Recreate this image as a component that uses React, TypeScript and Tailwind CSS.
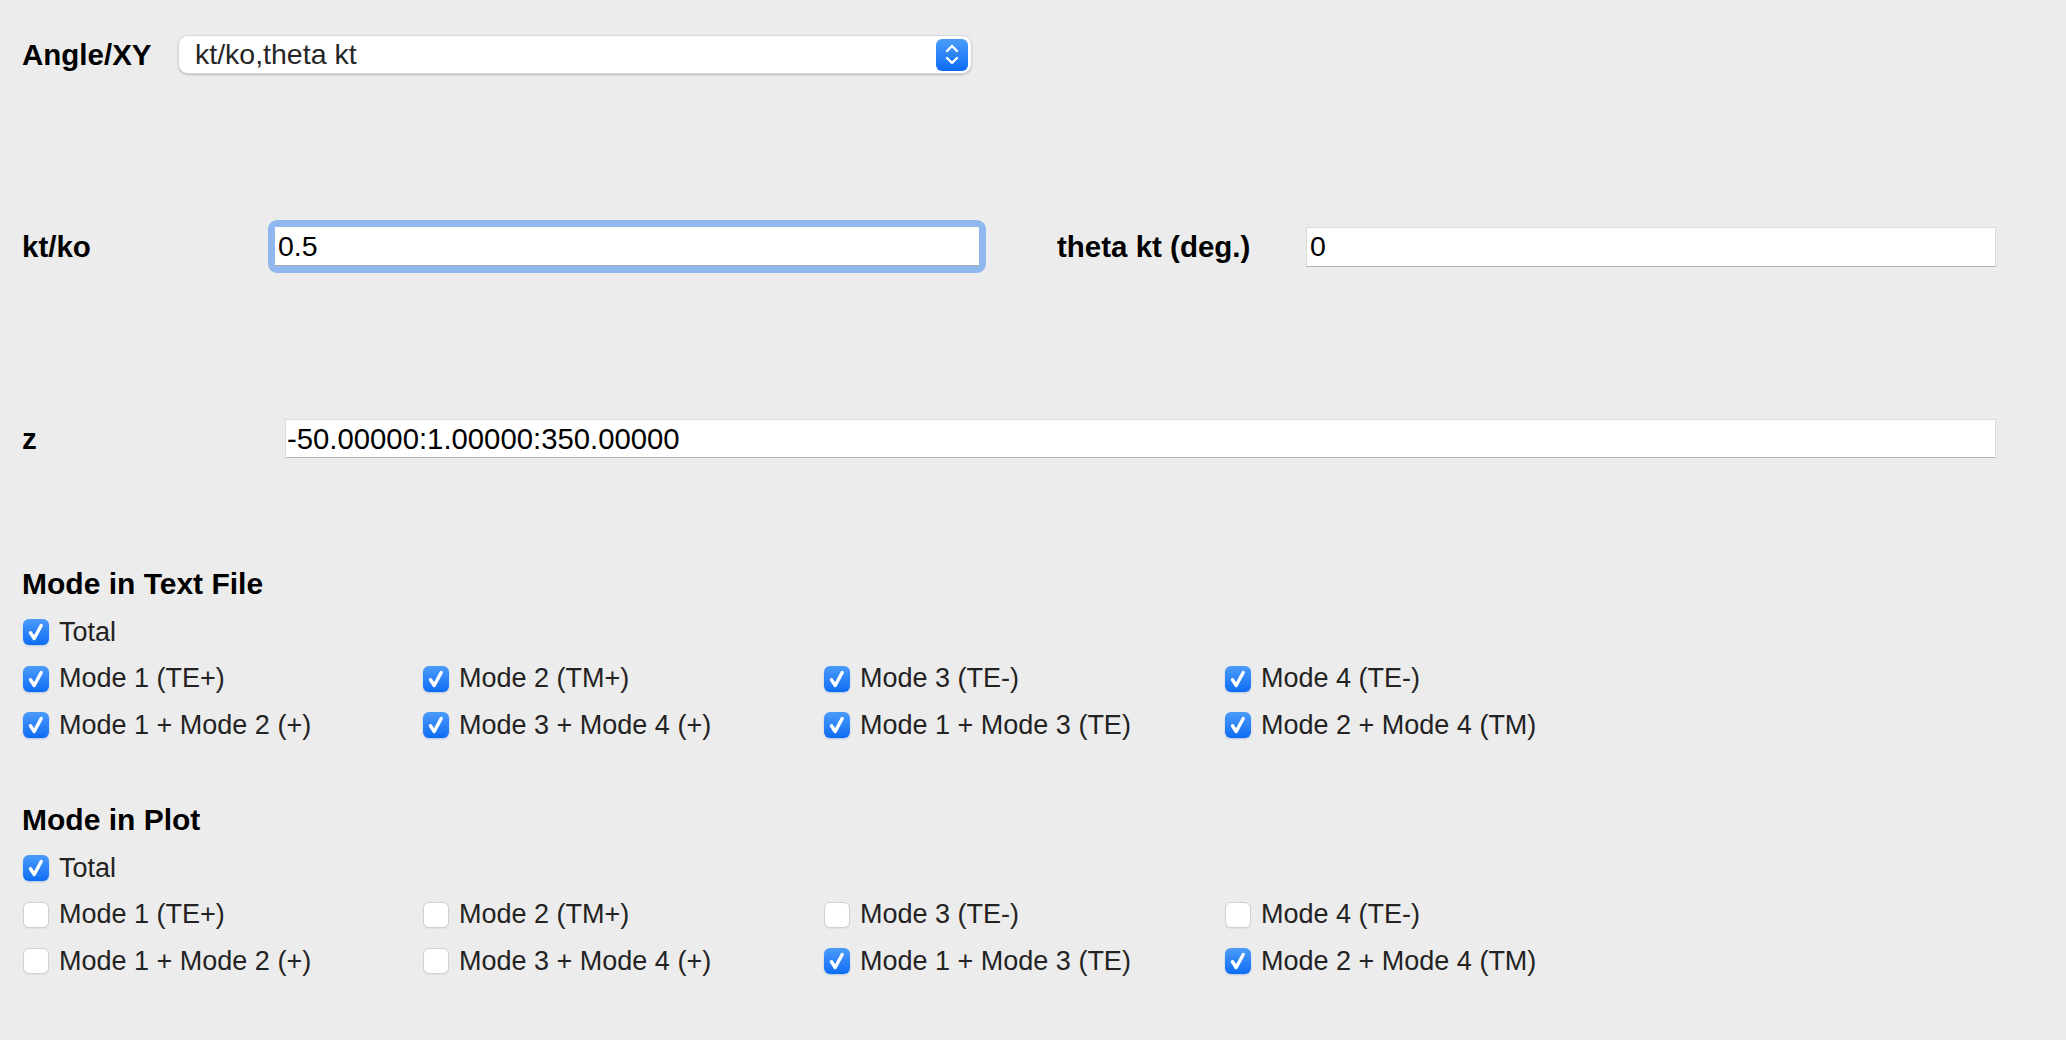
import React from "react";

function Box({ checked }: { checked: boolean }) {
  if (checked) {
    return (
      <span className="flex h-[26px] w-[26px] shrink-0 items-center justify-center rounded-[6px] bg-linear-to-b from-[#4a9bfa] to-[#0a6cf4] shadow-[0_1px_2px_rgba(0,80,200,0.25)]">
        <svg width="26" height="26" viewBox="0 0 26 26" fill="none">
          <path d="M7.5 13.8 L11.2 19.5 L18.2 6.5" stroke="white" strokeWidth="3.4" strokeLinecap="round" strokeLinejoin="round" />
        </svg>
      </span>
    );
  }
  return (
    <span className="h-[26px] w-[26px] shrink-0 rounded-[6px] border border-[#d0d0d0] bg-white shadow-[0_1px_1px_rgba(0,0,0,0.06)]" />
  );
}

function Check({ label, checked }: { label: string; checked: boolean }) {
  return (
    <div className="flex h-[46.5px] items-center gap-[10px]">
      <Box checked={checked} />
      <span className="text-[27px] leading-none text-[#232323]">{label}</span>
    </div>
  );
}

function ModeSection({ title, states }: { title: string; states: boolean[] }) {
  const labels = [
    "Mode 1 (TE+)",
    "Mode 2 (TM+)",
    "Mode 3 (TE-)",
    "Mode 4 (TE-)",
    "Mode 1 + Mode 2 (+)",
    "Mode 3 + Mode 4 (+)",
    "Mode 1 + Mode 3 (TE)",
    "Mode 2 + Mode 4 (TM)",
  ];
  return (
    <div className="flex flex-col">
      <div className="h-[34px] text-[30px] font-bold leading-[34px] text-black">{title}</div>
      <div className="mt-[8px] pl-[1px]">
        <Check label="Total" checked={states[0]} />
        <div className="grid grid-cols-[400px_401px_401px_401px]">
          {labels.map((l, i) => (
            <Check key={l} label={l} checked={states[i + 1]} />
          ))}
        </div>
      </div>
    </div>
  );
}

export default function App() {
  return (
    <div className="min-h-screen w-full bg-[#ececec] pl-[22px] pt-[35px] font-['Liberation_Sans',Arial,sans-serif]">
      {/* Angle/XY row */}
      <div className="flex h-[39px] items-center">
        <div className="w-[156px] pt-[2px] text-[29.5px] font-bold text-black">Angle/XY</div>
        <div className="flex h-[39px] w-[794px] items-center justify-between rounded-[10px] border border-[#d9d9d9] bg-white pl-[16px] pr-[3px] shadow-[0_1px_2px_rgba(0,0,0,0.22)]">
          <span className="text-[28.5px] leading-none text-[#262626]">kt/ko,theta kt</span>
          <span className="flex h-[32px] w-[32px] flex-col items-center justify-center gap-[3px] rounded-[6px] bg-linear-to-b from-[#4a9bfa] to-[#0a6cf4]">
            <svg width="14" height="9" viewBox="0 0 14 9" fill="none">
              <path d="M2 7 L7 2 L12 7" stroke="white" strokeWidth="2.4" strokeLinecap="round" strokeLinejoin="round" />
            </svg>
            <svg width="14" height="9" viewBox="0 0 14 9" fill="none">
              <path d="M2 2 L7 7 L12 2" stroke="white" strokeWidth="2.4" strokeLinecap="round" strokeLinejoin="round" />
            </svg>
          </span>
        </div>
      </div>

      {/* kt/ko row */}
      <div className="mt-[146px] flex h-[53px] items-center">
        <div className="w-[246px] pt-[2px] text-[29.5px] font-bold text-black">kt/ko</div>
        <div className="w-[718px] rounded-[9px] bg-[#91b7ef] p-[7px]">
          <div className="flex h-[39px] items-center border-b border-[#a9a9a9] bg-white pl-[3px]">
            <span className="text-[28.5px] leading-none text-black">0.5</span>
          </div>
        </div>
        <div className="ml-[71px] w-[249px] pt-[2px] text-[29.5px] font-bold text-black">theta kt (deg.)</div>
        <div className="flex h-[40px] w-[690px] items-center border border-[#dadada] border-b-[#b3b3b3] bg-white pl-[3px]">
          <span className="text-[28.5px] leading-none text-black">0</span>
        </div>
      </div>

      {/* z row */}
      <div className="mt-[146px] flex h-[39px] items-center">
        <div className="w-[263px] pt-[2px] text-[29.5px] font-bold text-black">z</div>
        <div className="flex h-[39px] w-[1711px] items-center border border-[#dadada] border-b-[#b3b3b3] bg-white pl-[1px]">
          <span className="text-[29.3px] leading-none text-black">-50.00000:1.00000:350.00000</span>
        </div>
      </div>

      <div className="mt-[109px]">
        <ModeSection title="Mode in Text File" states={[true, true, true, true, true, true, true, true, true]} />
      </div>
      <div className="mt-[54.5px] pb-[40px]">
        <ModeSection title="Mode in Plot" states={[true, false, false, false, false, false, false, true, true]} />
      </div>
    </div>
  );
}
